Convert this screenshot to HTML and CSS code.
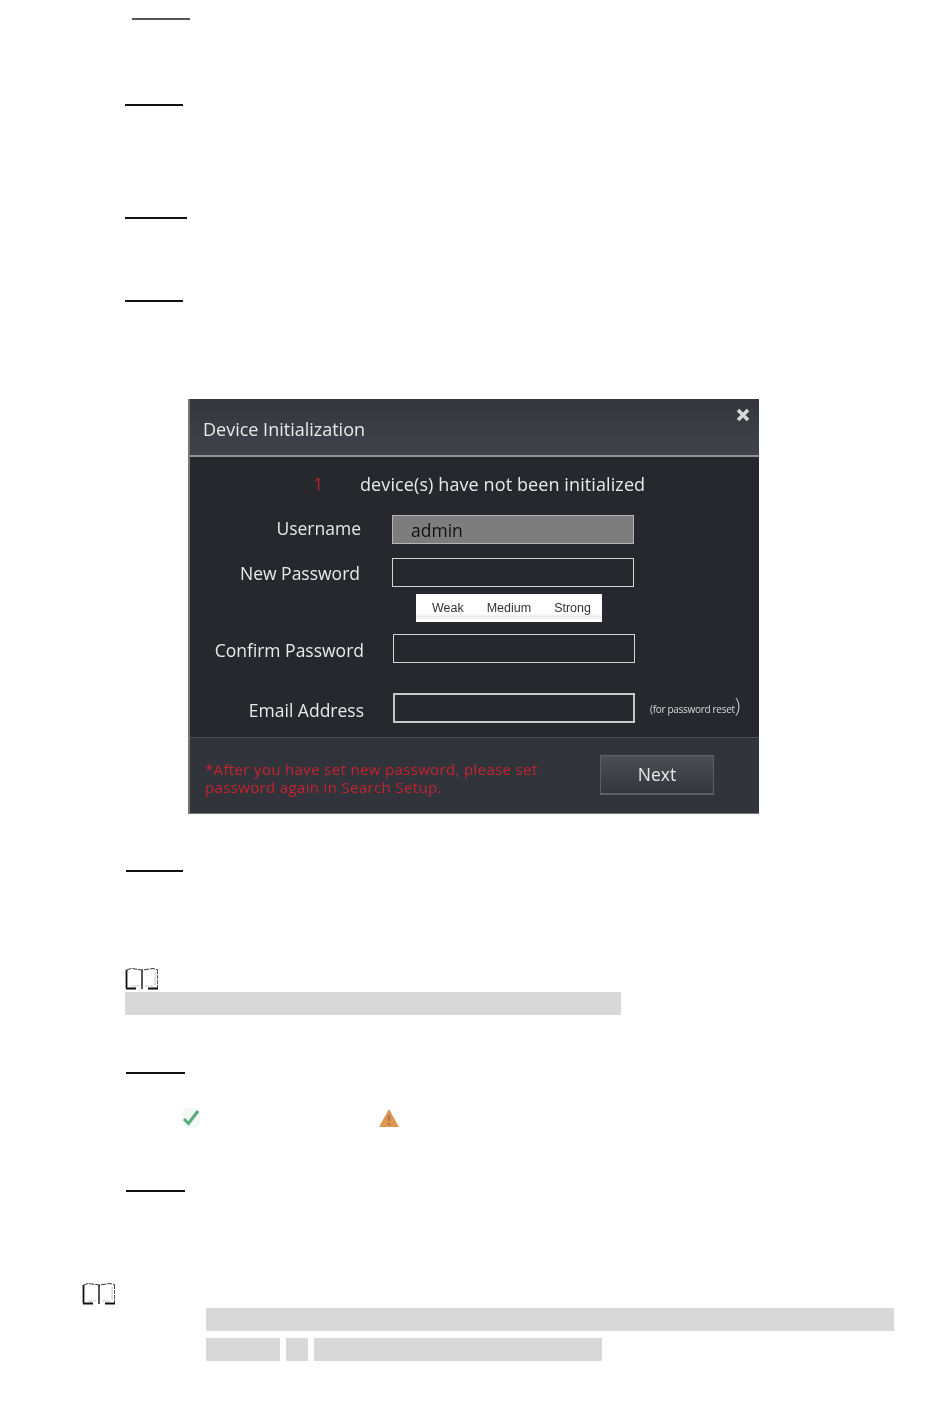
FILE: index.html
```html
<!DOCTYPE html>
<html lang="en">
<head>
<meta charset="utf-8">
<title>Device Initialization</title>
<link rel="stylesheet" href="styles.css">
</head>
<body>
<main class="page">
  <hr class="rule rule-a">
  <hr class="rule rule-b">
  <hr class="rule rule-c">
  <hr class="rule rule-d">

  <section class="dialog">
    <header class="dialog-head">
      <h1 class="dialog-title">Device Initialization</h1>
      <svg class="close" viewBox="0 0 14 14" aria-hidden="true"><path d="M2 2 12 12M12 2 2 12"/></svg>
    </header>
    <div class="dialog-body">
      <p class="notice"><span class="count">1</span><span>device(s) have not been initialized</span></p>
      <div class="field field-user">
        <label class="label">Username</label>
        <div class="input input-filled">admin</div>
      </div>
      <div class="field field-new">
        <label class="label label-new">New Password</label>
        <div class="input"></div>
      </div>
      <div class="strength"><span>Weak</span><span>Medium</span><span>Strong</span></div>
      <div class="field field-confirm">
        <label class="label label-wide">Confirm Password</label>
        <div class="input input-shift"></div>
      </div>
      <div class="field field-email">
        <label class="label label-wide label-email">Email Address</label>
        <div class="input input-shift input-email"></div>
        <span class="hint">(for password reset<span class="hint-paren">)</span></span>
      </div>
    </div>
    <footer class="dialog-foot">
      <p class="warning">*After you have set new password, please set<br>password again in Search Setup.</p>
      <button class="next" type="button">Next</button>
    </footer>
  </section>

  <hr class="rule rule-e">

  <svg class="book book-a" viewBox="0 0 34 24" aria-hidden="true">
    <path class="book-inner" d="M6 20H14M20 20H28M30 6V19"/>
    <path class="book-top" d="M1.500 4 6 2.500 14 3.500 17 4 21 3.500 28 2.500 33 4"/>
    <path class="book-left" d="M1.500 4V22"/>
    <path class="book-mid" d="M17 4V23"/>
    <path class="book-right" d="M32.500 4V22"/>
    <path class="book-base" d="M1 22.500H11M23 22.500H33"/>
  </svg>
  <div class="shade shade-a"></div>

  <hr class="rule rule-f">

  <div class="status-row">
    <svg class="check" viewBox="0 0 22 22" aria-hidden="true"><rect class="check-glow" x="2" y="1" width="18" height="20" rx="6"/><path class="check-mark" d="M4 12 8.500 16.500 18 4"/></svg>
    <svg class="warn" viewBox="0 0 22 20" aria-hidden="true"><path class="warn-fill" d="M11 1 21 19H1Z"/><path class="warn-bang" d="M11 7V13M11 15V17"/></svg>
  </div>

  <hr class="rule rule-g">

  <svg class="book book-b" viewBox="0 0 34 24" aria-hidden="true">
    <path class="book-inner" d="M6 20H14M20 20H28M30 6V19"/>
    <path class="book-top" d="M1.500 4 6 2.500 14 3.500 17 4 21 3.500 28 2.500 33 4"/>
    <path class="book-left" d="M1.500 4V22"/>
    <path class="book-mid" d="M17 4V23"/>
    <path class="book-right" d="M32.500 4V22"/>
    <path class="book-base" d="M1 22.500H11M23 22.500H33"/>
  </svg>
  <div class="shade shade-b"></div>
  <div class="shade-row">
    <div class="shade shade-c"></div>
    <div class="shade shade-d"></div>
    <div class="shade shade-e"></div>
  </div>
</main>
</body>
</html>
```
FILE: styles.css
```css
* { box-sizing: border-box; }
html, body { margin: 0; background: #fff; }
body { font-family: "Open Sans", "Noto Sans", sans-serif; }
.page { width: 950px; height: 1419px; padding-top: 18px; overflow: hidden; }

.rule { display: block; height: 2px; margin: 0 0 0 125px; border: 0; background: #111; }
.rule-a { width: 58px; margin-left: 132px; background: #555; }
.rule-b { width: 58px; margin-top: 84px; }
.rule-c { width: 62px; margin-top: 111px; }
.rule-d { width: 58px; margin-top: 81px; }
.rule-e { width: 57px; margin-top: 56px; margin-left: 126px; }
.rule-f { width: 59px; margin-top: 57px; margin-left: 126px; }
.rule-g { width: 59px; margin-top: 61px; margin-left: 126px; }

.dialog { width: 571px; height: 415px; margin: 97px 0 0 188px; display: flex; flex-direction: column; background: #26282d; border-left: 2px solid #777; color: #e9e9e9; filter: blur(0.3px); }
.dialog-head { height: 58px; flex: none; display: flex; justify-content: space-between; align-items: flex-start; padding: 18px 9px 0 13px; background: linear-gradient(#34363c, #40434b); border-bottom: 2px solid #929292; }
.dialog-title { margin: 0; font-size: 18px; line-height: 24px; font-weight: 400; }
.close { width: 14px; height: 14px; margin-top: -9px; fill: none; stroke: #d8d8d8; stroke-width: 3.5; }

.dialog-body { flex: 1; padding-top: 15px; }
.notice { display: flex; margin: 0; padding-left: 123px; font-size: 18px; letter-spacing: 0.1px; line-height: 24px; height: 24px; }
.count { width: 47px; color: #b3242c; }
.field { display: flex; align-items: center; }
.field-user { margin-top: 19px; }
.field-new { margin-top: 14px; }
.field-confirm { margin-top: 12px; }
.field-email { margin-top: 30px; }
.label { width: 171px; text-align: right; font-size: 17.500px; line-height: 24px; }
.label-new { padding-right: 1px; }
.label-wide { width: 174px; margin-top: 2px; }
.label-email { margin-top: 4px; }
.input { width: 242px; height: 29px; margin-left: 31px; border: 1px solid #d4d4d4; }
.field-user .label { margin-top: -3px; }
.input-shift { margin-left: 29px; }
.input-email { height: 30px; border-width: 2px; border-color: #c8c8c8; }
.input-filled { padding-left: 18px; background: #7d7d7d; border-color: #b5b5b5; color: #111; font-size: 17.500px; line-height: 28px; }
.strength { width: 186px; height: 28px; margin: 7px 0 0 226px; display: flex; justify-content: space-between; padding: 0 11px 0 16px; background: linear-gradient(#fff 70%, #ececec 80%, #fff 95%); color: #333; font-family: "Liberation Sans", sans-serif; font-size: 12.500px; line-height: 28px; }
.hint { margin: -5px 0 0 15px; font-size: 10px; letter-spacing: -0.3px; color: #d8d8d8; white-space: nowrap; }
.hint-paren { font-size: 20px; font-weight: 300; line-height: 20px; }

.dialog-foot { height: 77px; flex: none; display: flex; padding: 17px 0 0 15px; background: #31343a; border-top: 1px solid #4b4e54; border-bottom: 1px solid #777; }
.warning { width: 395px; margin: 5px 0 0; color: #c8222f; font-size: 15px; line-height: 18px; letter-spacing: 0.35px; white-space: nowrap; }
.next { width: 114px; height: 40px; padding: 0 0 2px; background: linear-gradient(#4b4e55, #33363c); border: 1px solid #5c5f65; border-bottom-width: 2px; color: #e8e8e8; font: 17.500px "Open Sans", sans-serif; }

.book { display: block; width: 34px; height: 24px; fill: none; filter: blur(0.25px); }
.book-a { margin: 94px 0 0 125px; }
.book-b { margin: 89px 0 0 82px; }
.book-inner { stroke: #c8c8c8; stroke-width: 1; }
.book-top { stroke: #333; stroke-width: 1; stroke-dasharray: 5 1; }
.book-left { stroke: #111; stroke-width: 1.800; }
.book-mid { stroke: #111; stroke-width: 1.400; }
.book-right { stroke: #555; stroke-width: 1; stroke-dasharray: 4 1; }
.book-base { stroke: #111; stroke-width: 2; }

.shade { height: 23px; background: #d8d8d8; }
.shade-a { width: 496px; margin: 2px 0 0 125px; }
.shade-b { width: 688px; margin: 3px 0 0 206px; }
.shade-row { display: flex; gap: 6px; margin: 7px 0 0 206px; }
.shade-c { width: 74px; }
.shade-d { width: 22px; }
.shade-e { width: 288px; }

.status-row { display: flex; align-items: center; gap: 176px; margin: 33px 0 0 180px; }
.check { width: 22px; height: 22px; flex: none; filter: blur(0.4px); }
.check-glow { fill: #f1faf4; }
.check-mark { fill: none; stroke: #5aa97a; stroke-width: 3; }
.warn { width: 22px; height: 20px; flex: none; filter: blur(0.5px); }
.warn-fill { fill: #e0954f; }
.warn-bang { stroke: #a87a58; stroke-width: 2.500; fill: none; }
```
